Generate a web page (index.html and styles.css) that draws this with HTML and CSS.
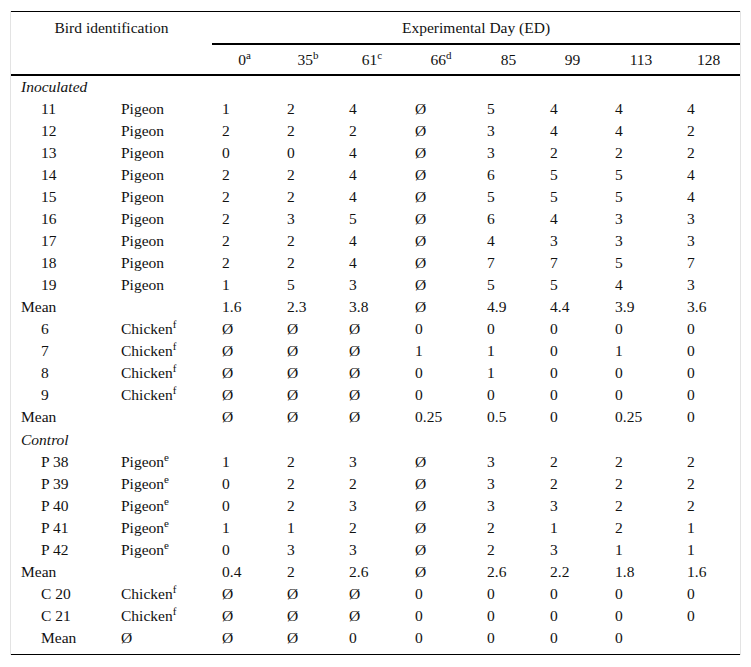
FILE: index.html
```html
<!DOCTYPE html>
<html>
<head>
<meta charset="utf-8">
<link rel="stylesheet" href="styles.css">
</head>
<body>
<div class="wrap">
<table class="data">
<colgroup>
<col class="c-id"><col class="c-sp"><col class="c0"><col class="c35"><col class="c61"><col class="c66"><col class="c85"><col class="c99"><col class="c113"><col class="c128">
</colgroup>
<thead>
<tr class="h1">
<th colspan="2">Bird identification</th>
<th colspan="8" class="ed">Experimental Day (ED)</th>
</tr>
<tr class="h2">
<th colspan="2"></th>
<th>0<sup>a</sup></th><th>35<sup>b</sup></th><th>61<sup>c</sup></th><th>66<sup>d</sup></th><th>85</th><th>99</th><th>113</th><th>128</th>
</tr>
</thead>
<tbody>
<tr><td colspan="10" class="group">Inoculated</td></tr>
<tr><td class="id">11</td><td>Pigeon</td><td>1</td><td>2</td><td>4</td><td>Ø</td><td>5</td><td>4</td><td>4</td><td>4</td></tr>
<tr><td class="id">12</td><td>Pigeon</td><td>2</td><td>2</td><td>2</td><td>Ø</td><td>3</td><td>4</td><td>4</td><td>2</td></tr>
<tr><td class="id">13</td><td>Pigeon</td><td>0</td><td>0</td><td>4</td><td>Ø</td><td>3</td><td>2</td><td>2</td><td>2</td></tr>
<tr><td class="id">14</td><td>Pigeon</td><td>2</td><td>2</td><td>4</td><td>Ø</td><td>6</td><td>5</td><td>5</td><td>4</td></tr>
<tr><td class="id">15</td><td>Pigeon</td><td>2</td><td>2</td><td>4</td><td>Ø</td><td>5</td><td>5</td><td>5</td><td>4</td></tr>
<tr><td class="id">16</td><td>Pigeon</td><td>2</td><td>3</td><td>5</td><td>Ø</td><td>6</td><td>4</td><td>3</td><td>3</td></tr>
<tr><td class="id">17</td><td>Pigeon</td><td>2</td><td>2</td><td>4</td><td>Ø</td><td>4</td><td>3</td><td>3</td><td>3</td></tr>
<tr><td class="id">18</td><td>Pigeon</td><td>2</td><td>2</td><td>4</td><td>Ø</td><td>7</td><td>7</td><td>5</td><td>7</td></tr>
<tr><td class="id">19</td><td>Pigeon</td><td>1</td><td>5</td><td>3</td><td>Ø</td><td>5</td><td>5</td><td>4</td><td>3</td></tr>
<tr><td>Mean</td><td></td><td>1.6</td><td>2.3</td><td>3.8</td><td>Ø</td><td>4.9</td><td>4.4</td><td>3.9</td><td>3.6</td></tr>
<tr><td class="id">6</td><td>Chicken<sup>f</sup></td><td>Ø</td><td>Ø</td><td>Ø</td><td>0</td><td>0</td><td>0</td><td>0</td><td>0</td></tr>
<tr><td class="id">7</td><td>Chicken<sup>f</sup></td><td>Ø</td><td>Ø</td><td>Ø</td><td>1</td><td>1</td><td>0</td><td>1</td><td>0</td></tr>
<tr><td class="id">8</td><td>Chicken<sup>f</sup></td><td>Ø</td><td>Ø</td><td>Ø</td><td>0</td><td>1</td><td>0</td><td>0</td><td>0</td></tr>
<tr><td class="id">9</td><td>Chicken<sup>f</sup></td><td>Ø</td><td>Ø</td><td>Ø</td><td>0</td><td>0</td><td>0</td><td>0</td><td>0</td></tr>
<tr><td>Mean</td><td></td><td>Ø</td><td>Ø</td><td>Ø</td><td>0.25</td><td>0.5</td><td>0</td><td>0.25</td><td>0</td></tr>
<tr class="grow"><td colspan="10" class="group">Control</td></tr>
<tr><td class="id">P 38</td><td>Pigeon<sup>e</sup></td><td>1</td><td>2</td><td>3</td><td>Ø</td><td>3</td><td>2</td><td>2</td><td>2</td></tr>
<tr><td class="id">P 39</td><td>Pigeon<sup>e</sup></td><td>0</td><td>2</td><td>2</td><td>Ø</td><td>3</td><td>2</td><td>2</td><td>2</td></tr>
<tr><td class="id">P 40</td><td>Pigeon<sup>e</sup></td><td>0</td><td>2</td><td>3</td><td>Ø</td><td>3</td><td>3</td><td>2</td><td>2</td></tr>
<tr><td class="id">P 41</td><td>Pigeon<sup>e</sup></td><td>1</td><td>1</td><td>2</td><td>Ø</td><td>2</td><td>1</td><td>2</td><td>1</td></tr>
<tr><td class="id">P 42</td><td>Pigeon<sup>e</sup></td><td>0</td><td>3</td><td>3</td><td>Ø</td><td>2</td><td>3</td><td>1</td><td>1</td></tr>
<tr><td>Mean</td><td></td><td>0.4</td><td>2</td><td>2.6</td><td>Ø</td><td>2.6</td><td>2.2</td><td>1.8</td><td>1.6</td></tr>
<tr><td class="id">C 20</td><td>Chicken<sup>f</sup></td><td>Ø</td><td>Ø</td><td>Ø</td><td>0</td><td>0</td><td>0</td><td>0</td><td>0</td></tr>
<tr><td class="id">C 21</td><td>Chicken<sup>f</sup></td><td>Ø</td><td>Ø</td><td>Ø</td><td>0</td><td>0</td><td>0</td><td>0</td><td>0</td></tr>
<tr class="last"><td class="id">Mean</td><td>Ø</td><td>Ø</td><td>Ø</td><td>0</td><td>0</td><td>0</td><td>0</td><td>0</td><td></td></tr>
</tbody>
</table>
</div>
</body>
</html>
```

FILE: styles.css
```css
html, body {
  margin: 0;
  padding: 0;
  background: #ffffff;
}

.wrap {
  margin: 11px 0 0 10px;
  width: 729px;
  border-left: 1px solid #e3e3e3;
  border-right: 1px solid #e3e3e3;
}

.data {
  width: 729px;
  table-layout: fixed;
  border-collapse: separate;
  border-spacing: 0;
  border-top: 1px solid #000;
  border-bottom: 1px solid #000;
  font-family: "Liberation Serif", "Times New Roman", serif;
  font-size: 15.5px;
  color: #111;
}

.c-id { width: 100px; }
.c-sp { width: 101px; }
.c0 { width: 65px; }
.c35 { width: 62px; }
.c61 { width: 66px; }
.c66 { width: 72px; }
.c85 { width: 63px; }
.c99 { width: 65px; }
.c113 { width: 72px; }
.c128 { width: 63px; }

th {
  font-weight: normal;
  text-align: center;
  vertical-align: top;
  padding: 0;
  white-space: nowrap;
}

.h1 th {
  line-height: 31px;
}

.h1 th.ed {
  border-bottom: 2px solid #000;
}

.h2 th {
  line-height: 29px;
  border-bottom: 2px solid #000;
}

td {
  padding: 0 0 0 10px;
  line-height: 22px;
  height: 22px;
  text-align: left;
  vertical-align: middle;
  white-space: nowrap;
}

td.id {
  padding-left: 30px;
}

td.group {
  font-style: italic;
}

tr.grow td {
  height: 23px;
  line-height: 23px;
}

tr.last td {
  padding-bottom: 5px;
}

sup {
  font-size: 11px;
  line-height: 0;
  vertical-align: 6px;
}
```
